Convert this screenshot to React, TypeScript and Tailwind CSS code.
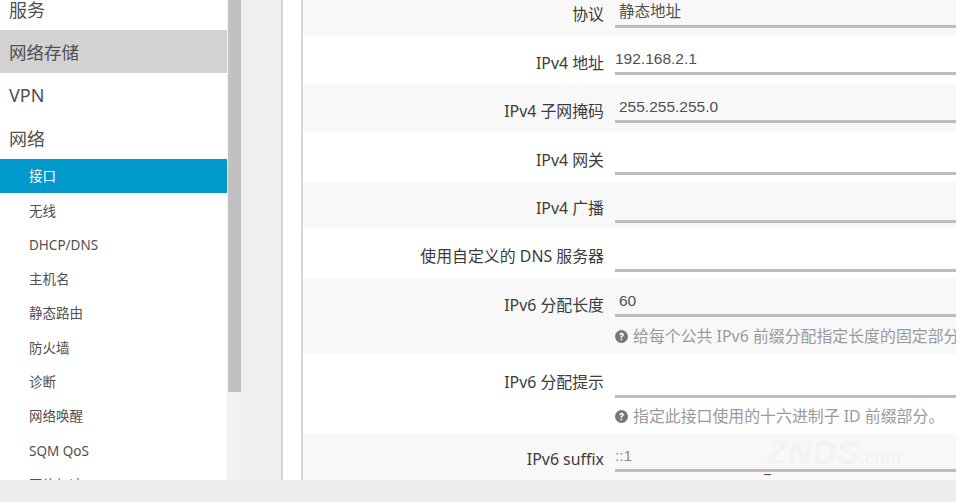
const subItems = ["无线", "DHCP/DNS", "主机名", "静态路由", "防火墙", "诊断", "网络唤醒", "SQM QoS", "网络加速"];

function HelpIcon() {
  return (
    <svg viewBox="0 0 16 16" className="h-[13px] w-[13px] shrink-0">
      <circle cx="8" cy="8" r="8" fill="#777777" />
      <path d="M5.2 6.1c.1-1.7 1.3-2.6 2.9-2.6 1.6 0 2.8.9 2.8 2.3 0 1-.5 1.6-1.4 2.1-.7.4-.9.7-.9 1.3v.3H6.9v-.5c0-1 .4-1.6 1.2-2.1.6-.4.9-.6.9-1 0-.4-.4-.7-.9-.7-.6 0-1 .3-1.1 1H5.2z" fill="#ffffff" />
      <rect x="6.9" y="10.7" width="1.9" height="1.9" fill="#ffffff" />
    </svg>
  );
}

interface FieldProps {
  label: string;
  value?: string;
  hint?: string;
  shaded?: boolean;
  height: string;
  labelTop: string;
  lineTop: string;
  valueClass?: string;
  hintTop?: string;
}

function Field({ label, value, hint, shaded, height, labelTop, lineTop, valueClass, hintTop }: FieldProps) {
  return (
    <div className={`flex ${height} ${shaded ? "bg-[#f8f8f8]" : "bg-white"}`}>
      <div className={`w-[301px] shrink-0 text-right font-['Noto_Sans','Noto_Sans_CJK_SC',sans-serif] text-[15.9px] leading-[20px] whitespace-nowrap text-[#3c3c3c] ${labelTop}`}>
        {label}
      </div>
      <div className="ml-[11px] min-w-0 flex-1 overflow-hidden">
        <div className={`h-[26px] border-b-[3px] border-[#bdbdbd] text-[15.5px] leading-[20px] text-[#505050] ${lineTop}`}>
          <div className={valueClass}>{value}</div>
        </div>
        {hint ? (
          <div className={`flex items-center gap-[5px] font-['Noto_Sans','Noto_Sans_CJK_SC',sans-serif] text-[15.9px] leading-[20px] whitespace-nowrap text-[#9a9a9a] ${hintTop}`}>
            <HelpIcon />
            <span>{hint}</span>
          </div>
        ) : null}
      </div>
    </div>
  );
}

export default function App() {
  return (
    <div className="flex h-[502px] w-[962px] overflow-hidden bg-white font-['Liberation_Sans','Noto_Sans_CJK_SC',sans-serif]">
      <div className="flex w-[956px] shrink-0 flex-col">
        <div className="flex h-[480px] overflow-hidden">
          <aside className="w-[227px] shrink-0 overflow-hidden bg-white font-['Noto_Sans','Noto_Sans_CJK_SC',sans-serif] text-[#505050]">
            <div className="h-[30px] pl-[9px] text-[18px] leading-[20px]">服务</div>
            <div className="flex h-[43px] items-center bg-[#d2d2d2] pl-[9px] pt-[1px] text-[17.5px]">网络存储</div>
            <div className="flex h-[43px] items-center pl-[9px] pt-[2px] text-[18px]">VPN</div>
            <div className="flex h-[43px] items-center pl-[9px] pt-[4px] text-[18px]">网络</div>
            <div className="flex h-[34px] items-center bg-[#0099cc] pl-[29px] text-[13.5px] text-white">接口</div>
            {subItems.map((item) => (
              <div key={item} className="flex h-[34.3px] items-center pl-[29px] pt-px text-[13.5px]">
                {item}
              </div>
            ))}
          </aside>
          <div className="flex w-[14px] shrink-0 flex-col bg-[#f1f1f1] pl-px">
            <div className="h-[392px] w-[13px] bg-[#c1c1c1]" />
          </div>
          <div className="w-[40px] shrink-0 bg-[#efefef]" />
          <main className="relative min-w-0 flex-1 border-l-2 border-[#d6d6d6] bg-white pl-[18px]">
            <div className="h-full border-l-2 border-[#d6d6d6]">
              <Field label="协议" value="静态地址" shaded height="h-[35px]" labelTop="pt-[4px]" lineTop="mt-[4px]" valueClass="-mt-[2px] pl-[4px]" />
              <Field label="IPv4 地址" value="192.168.2.1" height="h-[50px]" labelTop="pt-[18px]" lineTop="mt-[17px]" valueClass="-mt-[3px]" />
              <Field label="IPv4 子网掩码" value="255.255.255.0" shaded height="h-[46px]" labelTop="pt-[16px]" lineTop="mt-[16px]" valueClass="-mt-[4px] pl-[4px]" />
              <Field label="IPv4 网关" height="h-[51px]" labelTop="pt-[19px]" lineTop="mt-[18px]" />
              <Field label="IPv4 广播" shaded height="h-[46px]" labelTop="pt-[16px]" lineTop="mt-[15px]" />
              <Field label="使用自定义的 DNS 服务器" height="h-[50px]" labelTop="pt-[18px]" lineTop="mt-[18px]" />
              <Field label="IPv6 分配长度" value="60" hint="给每个公共 IPv6 前缀分配指定长度的固定部分" shaded height="h-[76px]" labelTop="pt-[17px]" lineTop="mt-[16px]" valueClass="-mt-[3px] pl-[4px]" hintTop="mt-[9px]" />
              <Field label="IPv6 分配提示" hint="指定此接口使用的十六进制子 ID 前缀部分。" height="h-[80px]" labelTop="pt-[18px]" lineTop="mt-[18px]" hintTop="mt-[8px]" />
              <Field label="IPv6 suffix" value="::1" shaded height="h-[46px]" labelTop="pt-[15px]" lineTop="mt-[14px]" valueClass="-mt-[2px] text-[#8a8a8a]" />
            </div>
            {/* faint watermark over the last row */}
            <div className="absolute top-[434px] left-[484px] font-['Liberation_Sans',sans-serif] text-[34px] leading-[36px] font-bold text-[#f3f3f3] italic">
              ZNDS<span className="text-[18px]">.com</span>
            </div>
            <div className="absolute top-[474px] left-[481px] h-px w-[7px] bg-[#a03050]" />
          </main>
        </div>
        <div className="h-[22px] bg-[#ededed]" />
      </div>
    </div>
  );
}
